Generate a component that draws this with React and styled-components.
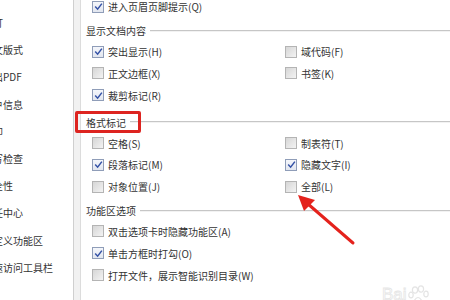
import React from 'react'
import styled, { createGlobalStyle } from 'styled-components'

const Global = createGlobalStyle`
  html, body {
    margin: 0;
    padding: 0;
    background: #fff;
    overflow: hidden;
  }
  #root {
    width: 450px;
    height: 300px;
  }
`

const sideItems = [
  '修订', '中文版式', '输出PDF', '用户信息', '打印',
  '拼写检查', '安全性', '信任中心', '自定义功能区', '快速访问工具栏',
]

const sections = [
  {
    rows: [[{ text: '进入页眉页脚提示(Q)', on: true }]],
  },
  {
    title: '显示文档内容',
    gap: 3,
    rows: [
      [{ text: '突出显示(H)', on: true }, { text: '域代码(F)' }],
      [{ text: '正文边框(X)' }, { text: '书签(K)' }],
      [{ text: '裁剪标记(R)', on: true }],
    ],
  },
  {
    title: '格式标记',
    marked: true,
    gap: 6,
    rows: [
      [{ text: '空格(S)' }, { text: '制表符(T)' }],
      [{ text: '段落标记(M)', on: true }, { text: '隐藏文字(I)', on: true }],
      [{ text: '对象位置(J)' }, { text: '全部(L)' }],
    ],
  },
  {
    title: '功能区选项',
    gap: 3,
    rows: [
      [{ text: '双击选项卡时隐藏功能区(A)' }],
      [{ text: '单击方框时打勾(O)', on: true }],
      [{ text: '打开文件，展示智能识别目录(W)' }],
    ],
  },
]

function Check({ on }) {
  return (
    <Box $on={on}>
      {on && (
        <svg width="11" height="11" viewBox="0 0 11 11">
          <path d="M2.2 5.6 L4.6 8.2 L8.9 2.6" fill="none" stroke="#3452a6" strokeWidth="1.5" />
        </svg>
      )}
    </Box>
  )
}

export default function App() {
  return (
    <>
      <Global />
      <Page>
        <Sidebar>
          {sideItems.map((s) => (
            <SideItem key={s}>{s}</SideItem>
          ))}
        </Sidebar>
        <Gutter />
        <Content>
          {sections.map((sec, i) => (
            <Section key={i} $gap={sec.gap}>
              {sec.title && (
                <Header>
                  <HeaderText>{sec.title}</HeaderText>
                  <Rule />
                  {sec.marked && <Highlight />}
                </Header>
              )}
              {sec.rows.map((row, j) => (
                <Row key={j}>
                  {row.map((c) => (
                    <Option key={c.text}>
                      <Check on={c.on} />
                      <span>{c.text}</span>
                    </Option>
                  ))}
                </Row>
              ))}
            </Section>
          ))}
        </Content>
        <Arrow width="75" height="70" viewBox="0 0 75 70">
          <defs>
            <filter id="soft" x="-20%" y="-20%" width="140%" height="140%">
              <feGaussianBlur stdDeviation="0.5" />
            </filter>
          </defs>
          <g filter="url(#soft)">
            <line x1="63" y1="58" x2="18" y2="19" stroke="#e4221d" strokeWidth="3" strokeLinecap="round" />
            <polygon points="8,10 25,15 14,26" fill="#e4221d" />
          </g>
        </Arrow>
        <Watermark>
          <span>Bai</span>
          <svg width="24" height="18" viewBox="0 0 24 18">
            <g fill="none" stroke="#e4e4e4" strokeWidth="1.2">
              <ellipse cx="7" cy="5" rx="2.6" ry="3.2" />
              <ellipse cx="13" cy="4" rx="2.6" ry="3.2" />
              <ellipse cx="3" cy="10" rx="2.2" ry="2.8" />
              <ellipse cx="18" cy="9" rx="2.2" ry="2.8" />
              <path d="M6 16 Q10 9 14 16 Z" />
            </g>
          </svg>
        </Watermark>
      </Page>
    </>
  )
}

const Page = styled.div`
  position: relative;
  width: 450px;
  height: 300px;
  display: flex;
  overflow: hidden;
  font-family: "Noto Sans CJK SC", "Microsoft YaHei", sans-serif;
  font-size: 10px;
  color: #333;
  background: #fff;
`

const Sidebar = styled.div`
  width: 73px;
  flex: none;
  border-right: 1px solid #cfcfcf;
  overflow: hidden;
  padding-top: 9px;
`

const SideItem = styled.div`
  height: 27.2px;
  line-height: 27.2px;
  margin-left: -17px;
  white-space: nowrap;
`

const Gutter = styled.div`
  width: 6px;
  flex: none;
  background: #f1f1f1;
  border-right: 1px solid #dcdcdc;
`

const Content = styled.div`
  flex: 1;
  margin-top: -4px;
`

const Section = styled.div`
  margin-top: ${(p) => (p.$gap ? `${p.$gap}px` : '0')};
`

const Header = styled.div`
  position: relative;
  height: 20px;
  display: flex;
  align-items: center;
  padding-left: 5px;
  gap: 4px;
`

const HeaderText = styled.span`
  white-space: nowrap;
`

const Rule = styled.div`
  flex: 1;
  height: 0;
  border-top: 1px solid #c6c6c6;
  border-bottom: 1px solid #f2f2f2;
`

const Highlight = styled.div`
  position: absolute;
  left: -6px;
  top: -1.5px;
  width: 60px;
  height: 16px;
  border: 3px solid #dd2420;
  border-radius: 2px;
`

const Row = styled.div`
  height: 21.8px;
  display: grid;
  grid-template-columns: 193px 1fr;
  align-items: center;
  padding-left: 11px;
`

const Option = styled.div`
  display: flex;
  align-items: center;
  gap: 4px;
  white-space: nowrap;
`

const Box = styled.div`
  width: 10px;
  height: 10px;
  flex: none;
  border: 1px solid ${(p) => (p.$on ? '#8f9db8' : '#b4b4b4')};
  background: ${(p) =>
    p.$on
      ? 'linear-gradient(#f4f6fb, #e2e6ef)'
      : 'linear-gradient(135deg, #d6d6d6, #f3f3f3)'};
  display: flex;
  align-items: center;
  justify-content: center;
  svg {
    flex: none;
  }
`

const Arrow = styled.svg`
  position: absolute;
  left: 290px;
  top: 185px;
`

const Watermark = styled.div`
  position: absolute;
  left: 382px;
  top: 278px;
  display: flex;
  align-items: flex-end;
  gap: 1px;
  font-family: "Liberation Sans", Arial, sans-serif;
  font-size: 17px;
  color: transparent;
  -webkit-text-stroke: 0.8px #e6e6e6;
  span {
    line-height: 1;
    margin-top: 8px;
  }
`
